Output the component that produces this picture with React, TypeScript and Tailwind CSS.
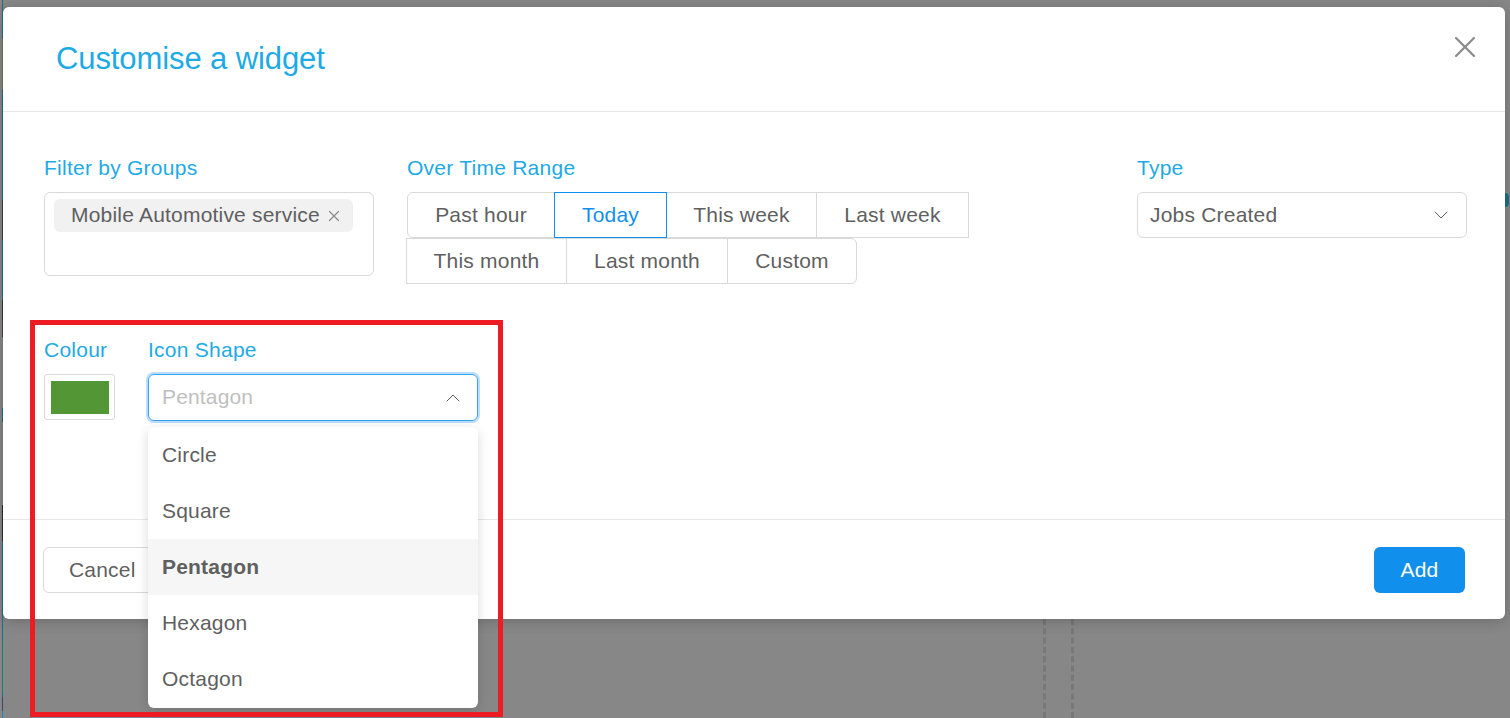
import { ChevronDown, ChevronUp, X } from "lucide-react";

const row1 = ["Past hour", "Today", "This week", "Last week"];
const row2 = ["This month", "Last month", "Custom"];
const options = ["Circle", "Square", "Pentagon", "Hexagon", "Octagon"];

// the sliver of page colour showing at the left edge of the window
const strip = [
  { h: 39, c: "#1d6d8e" },
  { h: 50, c: "#7b7354" },
  { h: 111, c: "#1d6d8e" },
  { h: 40, c: "#3f3b40" },
  { h: 60, c: "#1d6d8e" },
  { h: 20, c: "#3a3a3e" },
  { h: 17, c: "#4a4058" },
  { h: 71, c: "#808080" },
  { h: 14, c: "#1d6d8e" },
  { h: 83, c: "#808080" },
  { h: 36, c: "#2e2b2b" },
  { h: 101, c: "#1d6d8e" },
  { h: 50, c: "#1f7a70" },
  { h: 5, c: "#1d6d8e" },
  { h: 14, c: "#3d4668" },
  { h: 7, c: "#1a8ac0" },
];

function Label({ children }: { children: React.ReactNode }) {
  return <div className="h-[24px] text-[21px] leading-[24px] tracking-[0.25px] text-[#1eaae6]">{children}</div>;
}

export default function App() {
  return (
    <div className="relative h-[718px] w-[1510px] overflow-hidden bg-[#878787] pt-[7px] pl-[3px] font-['Liberation_Sans',Arial,sans-serif] text-[#5f5f5f]">
      {/* Page behind the overlay */}
      <div className="absolute top-[619px] left-[1043px] h-[99px] w-[3px] border-l-[3px] border-dashed border-[#787878]" />
      <div className="absolute top-[619px] left-[1071px] h-[99px] w-[3px] border-l-[3px] border-dashed border-[#787878]" />
      <div className="absolute top-0 left-[2px] flex h-full w-[1px] flex-col">
        {strip.map((s, i) => (
          <div key={i} style={{ height: s.h, backgroundColor: s.c }} />
        ))}
      </div>
      <div className="absolute top-[193px] left-[1505px] h-[14px] w-[4px] rounded-r-full bg-[#1d6d8e]" />

      {/* Modal */}
      <div className="relative flex h-[612px] w-[1502px] flex-col rounded-[6px] bg-white shadow-[0_2px_14px_rgba(0,0,0,0.2)]">
        <div className="flex h-[105px] shrink-0 items-start justify-between border-b border-[#e8e8e8] pt-[33px] pr-[22px] pl-[53px]">
          <div className="text-[31px] leading-[38px] tracking-[-0.1px] text-[#1eaae6]">Customise a widget</div>
          <X size={36} strokeWidth={1.5} className="mt-[-11px] text-[#8c8c8c]" />
        </div>

        <div className="h-[407px] shrink-0 pt-[44px] pl-[41px]">
          <div className="flex h-[182px] items-start">
            <div className="w-[330px]">
              <Label>Filter by Groups</Label>
              <div className="mt-[12px] h-[84px] rounded-[6px] border border-[#d9d9d9] px-[9px] pt-[6px]">
                <div className="flex h-[33px] w-[299px] items-center rounded-[6px] bg-[#f1f1f1] pb-[1px] pl-[17px] text-[21px] tracking-[0.2px]">
                  Mobile Automotive service
                  <X size={18} strokeWidth={1.6} className="mt-[1px] ml-[5px] text-[#8c8c8c]" />
                </div>
              </div>
            </div>

            <div className="ml-[33px] w-[600px]">
              <Label>Over Time Range</Label>
              <div className="mt-[12px] flex h-[46px] text-[21px] tracking-[0.2px]">
                {row1.map((t, i) => (
                  <div
                    key={t}
                    className={
                      i === 1
                        ? "z-10 ml-[-1px] flex w-[113px] items-center justify-center border border-[#118fed] text-[#118fed]"
                        : i === 0
                          ? "flex w-[148px] items-center justify-center rounded-l-[6px] border border-[#d9d9d9]"
                          : i === 2
                            ? "ml-[-1px] flex w-[151px] items-center justify-center border border-[#d9d9d9]"
                            : "ml-[-1px] flex w-[153px] items-center justify-center border border-[#d9d9d9]"
                    }
                  >
                    {t}
                  </div>
                ))}
              </div>
              <div className="ml-[-1px] flex h-[46px] text-[21px] tracking-[0.2px]">
                {row2.map((t, i) => (
                  <div
                    key={t}
                    className={
                      i === 0
                        ? "flex w-[161px] items-center justify-center border border-[#d9d9d9]"
                        : i === 1
                          ? "ml-[-1px] flex w-[162px] items-center justify-center border border-[#d9d9d9]"
                          : "ml-[-1px] flex w-[130px] items-center justify-center rounded-r-[6px] border border-[#d9d9d9]"
                    }
                  >
                    {t}
                  </div>
                ))}
              </div>
            </div>

            <div className="ml-[130px] w-[330px]">
              <Label>Type</Label>
              <div className="mt-[12px] flex h-[46px] items-center justify-between rounded-[6px] border border-[#d9d9d9] pr-[13px] pl-[12px] text-[21px] tracking-[0.2px]">
                Jobs Created
                <ChevronDown size={24} strokeWidth={1} />
              </div>
            </div>
          </div>

          <div className="flex items-start">
            <div className="w-[104px]">
              <Label>Colour</Label>
              <div className="mt-[12px] h-[46px] w-[71px] rounded-[3px] border border-[#d9d9d9] p-[6px]">
                <div className="h-[33px] w-[58px] bg-[#529636]" />
              </div>
            </div>
            <div className="w-[330px]">
              <Label>Icon Shape</Label>
              <div className="mt-[12px] flex h-[47px] items-center justify-between rounded-[6px] border border-[#3aa0f0] pr-[12px] pb-[1px] pl-[13px] text-[21px] tracking-[0.15px] text-[#bfbfbf] shadow-[0_0_0_2px_rgba(24,144,255,0.3)]">
                Pentagon
                <ChevronUp size={24} strokeWidth={1} className="mt-[1px] text-[#5f5f5f]" />
              </div>
            </div>
          </div>
        </div>

        <div className="flex flex-1 items-start justify-between border-t border-[#e8e8e8] pt-[27px] pr-[40px] pl-[40px]">
          <div className="flex h-[46px] w-[130px] items-center rounded-[6px] border border-[#d9d9d9] pl-[25px] text-[21px] tracking-[0.2px]">Cancel</div>
          <div className="flex h-[46px] w-[91px] items-center justify-center rounded-[6px] bg-[#118fed] text-[21px] tracking-[0.2px] text-white">Add</div>
        </div>
      </div>

      {/* Open dropdown */}
      <div className="absolute top-[427px] left-[148px] w-[330px] overflow-hidden rounded-[6px] bg-white pb-[1px] shadow-[0_3px_12px_rgba(0,0,0,0.15)]">
        {options.map((o) => (
          <div
            key={o}
            className={
              o === "Pentagon"
                ? "flex h-[56px] items-center bg-[#f6f6f6] pl-[14px] text-[21px] font-bold tracking-[0.2px]"
                : "flex h-[56px] items-center pl-[14px] text-[21px] tracking-[0.2px]"
            }
          >
            {o}
          </div>
        ))}
      </div>

      {/* Annotation box */}
      <div className="pointer-events-none absolute top-[320px] left-[30px] h-[397px] w-[473px] border-[5px] border-[#ed1c24]" />
    </div>
  );
}
